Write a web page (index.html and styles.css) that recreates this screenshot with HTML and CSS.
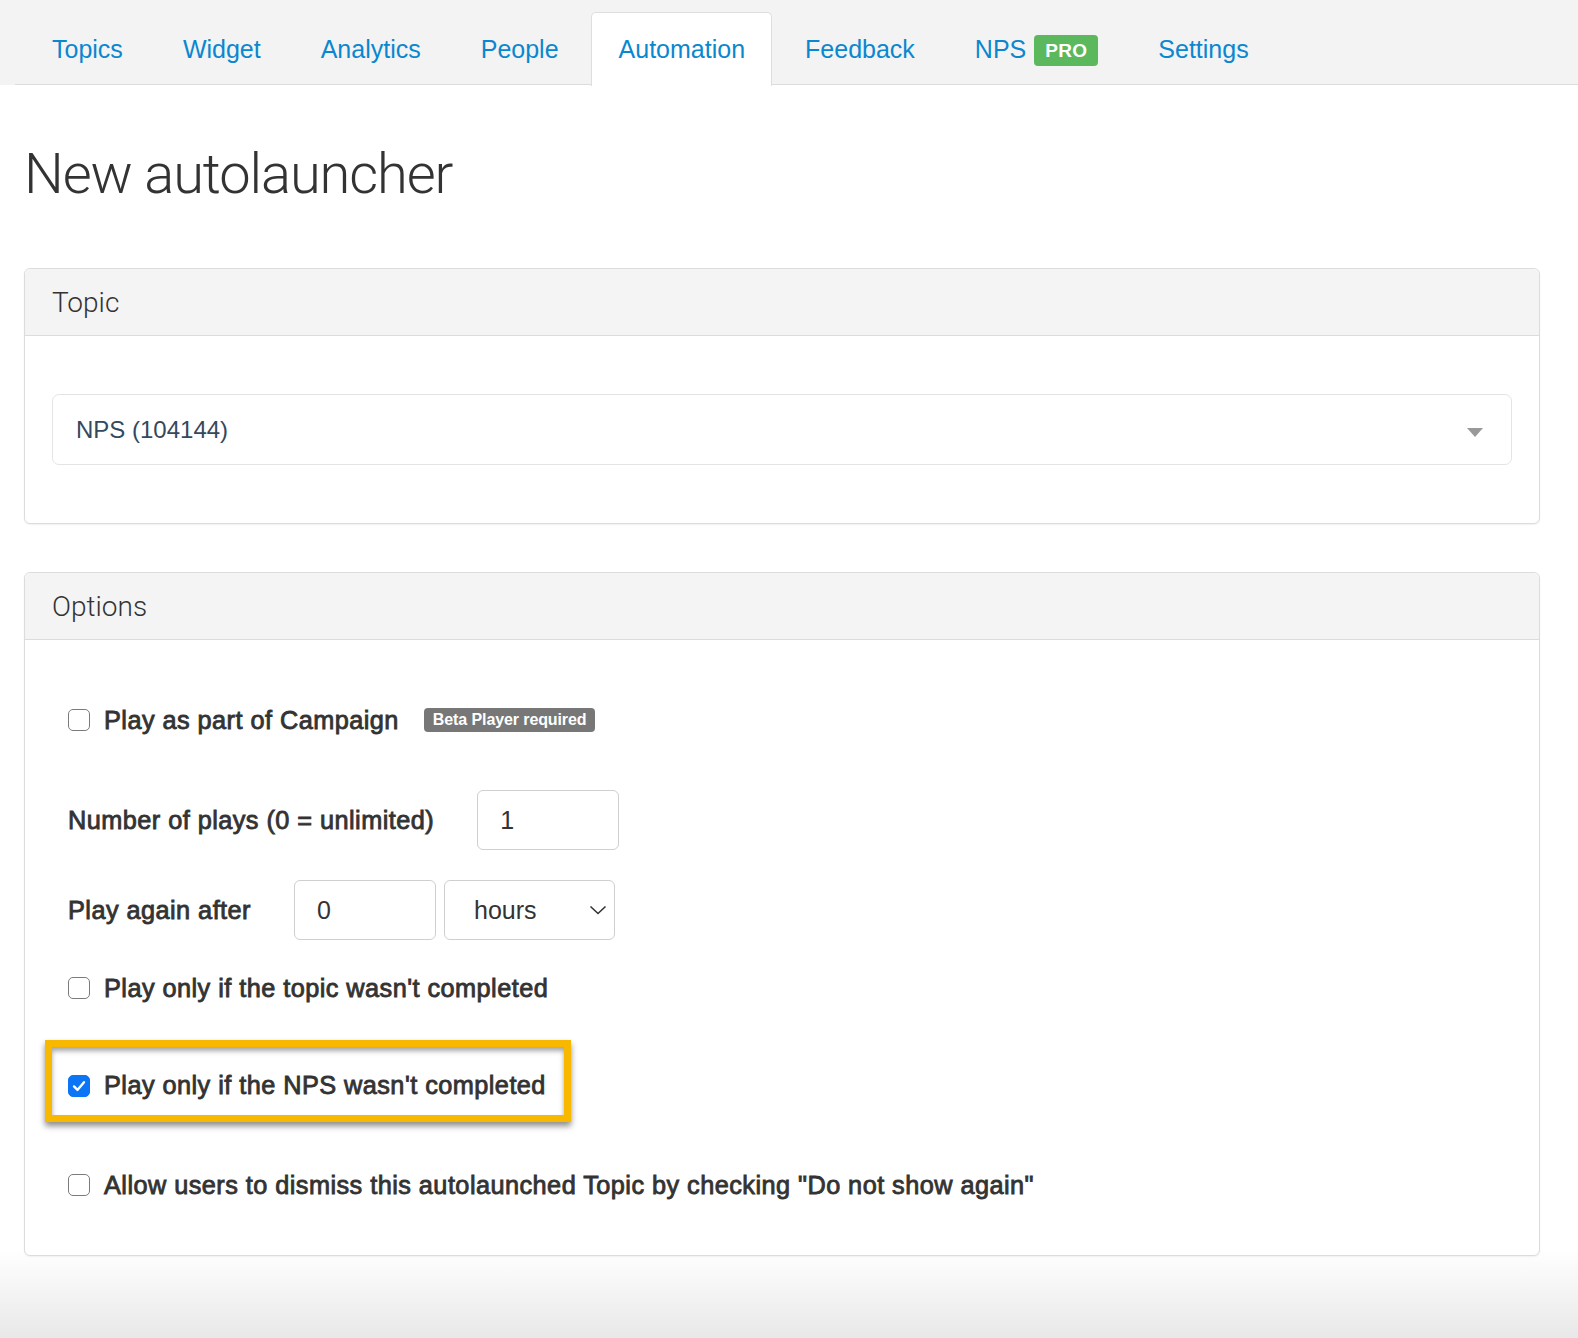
FILE: index.html
```html
<!DOCTYPE html>
<html lang="en">
<head>
<meta charset="utf-8">
<title>New autolauncher</title>
<link rel="stylesheet" href="styles.css">
</head>
<body>
<nav class="topnav">
  <ul class="tabs">
    <li class="tab"><a href="#">Topics</a></li>
    <li class="tab"><a href="#">Widget</a></li>
    <li class="tab"><a href="#">Analytics</a></li>
    <li class="tab"><a href="#">People</a></li>
    <li class="tab active"><a href="#">Automation</a></li>
    <li class="tab"><a href="#">Feedback</a></li>
    <li class="tab"><a href="#">NPS <span class="pro">PRO</span></a></li>
    <li class="tab"><a href="#">Settings</a></li>
  </ul>
</nav>

<main class="content">
  <h1 class="title">New autolauncher</h1>

  <section class="panel">
    <div class="panel-head">Topic</div>
    <div class="panel-body topic-body">
      <div class="topic-select">
        <span class="topic-value">NPS (104144)</span>
        <span class="caret"></span>
      </div>
    </div>
  </section>

  <section class="panel options">
    <div class="panel-head">Options</div>
    <div class="panel-body options-body">
      <div class="row check-row row-campaign">
        <span class="box"></span>
        <span class="label">Play as part of Campaign</span>
        <span class="badge">Beta Player required</span>
      </div>

      <div class="row field-row row-plays">
        <span class="label">Number of plays (0 = unlimited)</span>
        <div class="input">1</div>
      </div>

      <div class="row field-row row-again">
        <span class="label">Play again after</span>
        <div class="input">0</div>
        <div class="input select">
          <span>hours</span>
          <svg class="chev" width="18" height="10" viewBox="0 0 18 10"><path d="M1.5 1.5 L9 8.5 L16.5 1.5" fill="none" stroke="#333" stroke-width="1.6"/></svg>
        </div>
      </div>

      <div class="row check-row row-topic">
        <span class="box"></span>
        <span class="label">Play only if the topic wasn't completed</span>
      </div>

      <div class="highlight">
        <div class="row check-row">
          <span class="box checked"><svg width="22" height="22" viewBox="0 0 22 22"><path d="M5.5 11.5 L9.3 15.3 L16.5 6.8" fill="none" stroke="#fff" stroke-width="2.6" stroke-linecap="round" stroke-linejoin="round"/></svg></span>
          <span class="label">Play only if the NPS wasn't completed</span>
        </div>
      </div>

      <div class="row check-row row-allow">
        <span class="box"></span>
        <span class="label">Allow users to dismiss this autolaunched Topic by checking "Do not show again"</span>
      </div>
    </div>
  </section>
</main>
</body>
</html>
```

FILE: styles.css
```css
* { box-sizing: border-box; }

html, body {
  margin: 0;
  padding: 0;
}

body {
  width: 1578px;
  min-height: 1338px;
  font-family: "Liberation Sans", Arial, sans-serif;
  color: #333;
  background: linear-gradient(to bottom, #ffffff 0px, #ffffff 1250px, #e8e8e8 1338px);
}

/* ---------- top tabs ---------- */
.topnav {
  background: #f3f3f3;
  height: 85px;
}

.tabs {
  list-style: none;
  margin: 0 0 0 15px;
  padding: 12px 0 0 9px;
  height: 85px;
  display: flex;
  border-bottom: 1px solid #dcdcdc;
}

.tab {
  margin-right: 5px;
  height: 73px;
  border: 1px solid transparent;
  border-bottom: none;
  border-radius: 5px 5px 0 0;
}

.tab a {
  display: flex;
  align-items: center;
  height: 100%;
  padding: 0 26px 0 27px;
  font-size: 25px;
  color: #0a87cf;
  text-decoration: none;
}

.tab.active {
  background: #fff;
  border-color: #dedede;
  height: 74px;
  margin-bottom: -1px;
}

.pro {
  display: inline-block;
  margin-left: 8px;
  background: #5cb85c;
  color: #fff;
  font-weight: bold;
  font-size: 19px;
  line-height: 31px;
  padding: 0 11px;
  border-radius: 4px;
  letter-spacing: 0.3px;
  position: relative;
  top: 1px;
}

/* ---------- content ---------- */
.content {
  padding: 0 38px 0 24px;
}

.title {
  margin: 57px 0 62px 0;
  font-family: Roboto, "Liberation Sans", sans-serif;
  font-weight: 300;
  font-size: 56px;
  line-height: 64px;
  color: #333;
  letter-spacing: -1.1px;
}

.panel {
  border: 1px solid #dcdcdc;
  border-radius: 6px;
  background: #fff;
  box-shadow: 0 1px 2px rgba(0,0,0,0.06);
}

.panel + .panel { margin-top: 48px; }

.panel-head {
  height: 67px;
  display: flex;
  align-items: center;
  padding: 0 27px;
  background: #f4f4f4;
  border-bottom: 1px solid #dcdcdc;
  border-radius: 6px 6px 0 0;
  font-family: Roboto, "Liberation Sans", sans-serif;
  font-weight: 300;
  font-size: 28px;
  color: #333;
}

.topic-body {
  padding: 58px 27px 58px 27px;
}

.topic-select {
  height: 71px;
  border: 1px solid #e4e4e4;
  border-radius: 7px;
  display: flex;
  align-items: center;
  justify-content: space-between;
  padding: 0 28px 0 23px;
}

.topic-value {
  font-size: 24px;
  color: #34495e;
}

.caret {
  width: 0;
  height: 0;
  border-left: 8px solid transparent;
  border-right: 8px solid transparent;
  border-top: 9px solid #999;
  margin-top: 6px;
}

/* ---------- options ---------- */
.options-body {
  padding: 65px 28px 55px 43px;
}

.row {
  display: flex;
  align-items: center;
}

.check-row { height: 30px; }

.label {
  font-size: 25.3px;
  font-weight: normal;
  color: #333;
  letter-spacing: 0.45px;
  -webkit-text-stroke: 0.85px #333;
}

.box {
  width: 22px;
  height: 22px;
  border: 1.5px solid #7b7b7b;
  border-radius: 5px;
  background: #fff;
  margin-right: 14px;
  flex: none;
  display: flex;
  align-items: center;
  justify-content: center;
}

.box.checked {
  background: #0c75f5;
  border-color: #0c75f5;
}

.box.checked svg { display: block; }

.badge {
  margin-left: 25px;
  background: #777;
  color: #fff;
  font-weight: bold;
  font-size: 16px;
  line-height: 24px;
  padding: 0 9px;
  border-radius: 4px;
  letter-spacing: -0.1px;
}

.field-row .label { margin-right: 43px; }

.row-plays { margin-top: 55px; }
.row-again { margin-top: 30px; }
.row-topic { margin-top: 33px; }

.input {
  width: 142px;
  height: 60px;
  border: 1px solid #cfcfcf;
  border-radius: 6px;
  display: flex;
  align-items: center;
  padding-left: 22px;
  font-size: 25px;
  color: #333;
}

.input.select {
  width: 171px;
  margin-left: 8px;
  padding: 0 7px 0 29px;
  justify-content: space-between;
}

.chev { display: block; }

.highlight {
  margin: 37px 0 0 -23px;
  width: 526px;
  height: 82px;
  border: 7px solid #f9b800;
  padding: 0 0 0 16px;
  display: flex;
  align-items: center;
  box-shadow: 0 4px 6px rgba(0,0,0,0.45), inset 0 4px 5px rgba(0,0,0,0.35);
}

.highlight .row { margin-top: 9px; }

.row-allow { margin-top: 48px; }
```
